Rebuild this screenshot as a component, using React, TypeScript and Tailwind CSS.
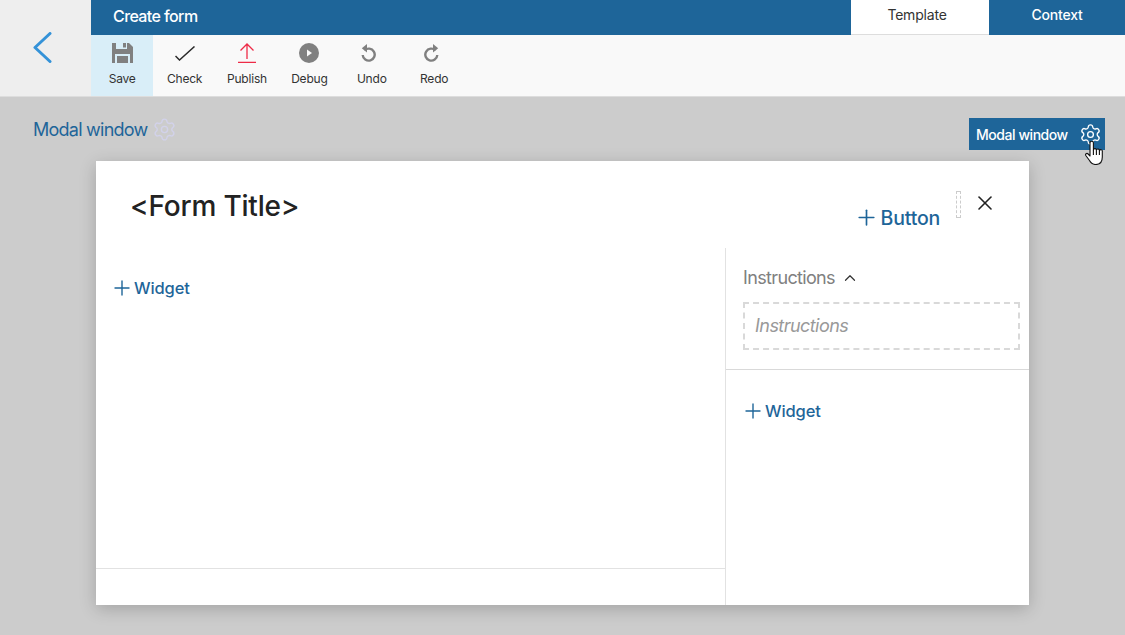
import { ChevronUp, Settings, X, Plus } from 'lucide-react';
import type { ReactNode } from 'react';

function ToolItem({ label, active, children }: { label: string; active?: boolean; children: ReactNode }) {
    return (
        <div className={`flex h-full w-[62.4px] flex-col items-center ${active ? 'bg-[#d9eef8]' : ''}`}>
            <div className="flex h-[36px] w-full items-center justify-center">{children}</div>
            <span className="pt-[1px] text-[12px] leading-[14px] tracking-[-0.2px] text-[#333333]">{label}</span>
        </div>
    );
}

function AddLink({ label }: { label: string }) {
    return (
        <div className="flex items-center text-[#1e6599]">
            <Plus className="h-[24px] w-[24px]" strokeWidth={1.4} />
            <span className="text-[16.5px] font-medium leading-[20px] tracking-[-0.1px]">{label}</span>
        </div>
    );
}

export default function App() {
    return (
        <div className="flex h-[635px] w-[1125px] flex-col overflow-hidden bg-[#cccccc] font-['Inter',sans-serif]">
            {/* Header */}
            <div className="flex h-[97px] shrink-0 border-b border-[#dddddd]">
                <div className="flex w-[91px] shrink-0 items-start bg-[#eeeeee] pl-[33px] pt-[32px]">
                    <svg width="19" height="31" viewBox="0 0 19 31" fill="none" stroke="#3492d8" strokeWidth="3" strokeLinecap="round" strokeLinejoin="round">
                        <path d="M17 1.5 2 15.5 17 29.5" />
                    </svg>
                </div>
                <div className="flex flex-1 flex-col">
                    <div className="flex h-[35px] items-stretch bg-[#1e6599]">
                        <div className="flex-1 pl-[22px] pt-[7px] text-[16px] font-medium leading-[19px] tracking-[-0.6px] text-white">Create form</div>
                        <div className="w-[138px] border-b border-[#dddddd] bg-white pr-[6px] pt-[6px] text-center text-[14px] leading-[17px] tracking-[-0.2px] text-[#333333]">Template</div>
                        <div className="w-[136px] pt-[6px] text-center text-[14px] font-medium leading-[18px] tracking-[-0.2px] text-white">Context</div>
                    </div>
                    <div className="flex h-[61px] bg-[#f9f9f9]">
                        <ToolItem label="Save" active>
                            <svg width="21" height="20" viewBox="0 0 21 20" fill="#808080">
                                <path fillRule="evenodd" d="M0 0h4v6h11V0h2l4 4v16h-3v-9H3v9H0zM11 0h3v4.500h-3z" />
                                <path d="M5 13h11v7H5z" />
                            </svg>
                        </ToolItem>
                        <ToolItem label="Check">
                            <svg width="20" height="15" viewBox="0 0 20 15" fill="none" stroke="#2b2b2b" strokeWidth="1.500">
                                <path d="M.5 10l4 4L19.500 .5" />
                            </svg>
                        </ToolItem>
                        <ToolItem label="Publish">
                            <svg width="18" height="20" viewBox="0 0 18 20" fill="none" stroke="#ee2b47" strokeWidth="1.300">
                                <path d="M9 16V1M2.500 7.500 9 1l6.500 6.500M0 19.300h18" />
                            </svg>
                        </ToolItem>
                        <ToolItem label="Debug">
                            <svg width="20" height="20" viewBox="0 0 20 20">
                                <circle cx="10" cy="10" r="10" fill="#808080" />
                                <path d="M8 6.500 13 10l-5 3.500z" fill="#f9f9f9" />
                            </svg>
                        </ToolItem>
                        <ToolItem label="Undo">
                            <svg className="mr-[6px]" width="15" height="18" viewBox="0 0 15 18" fill="none" stroke="#808080" strokeWidth="2.400">
                                <path d="M3.500 6.300a6 6 0 1 1-1.800 4.700" />
                                <path d="M6 0 .8 4.200 6 8.500z" fill="#808080" stroke="none" />
                            </svg>
                        </ToolItem>
                        <ToolItem label="Redo">
                            <svg className="mr-[6px]" width="15" height="18" viewBox="0 0 15 18" fill="none" stroke="#808080" strokeWidth="2.400">
                                <path d="M11.500 6.300a6 6 0 1 0 1.800 4.700" />
                                <path d="M9 0 14.200 4.200 9 8.500z" fill="#808080" stroke="none" />
                            </svg>
                        </ToolItem>
                    </div>
                </div>
            </div>

            {/* Modal caption row */}
            <div className="flex h-[64px] shrink-0 items-start justify-between pl-[33px] pr-[20px]">
                <div className="flex items-center gap-[4px] pt-[20px]">
                    <span className="text-[18px] leading-[22px] tracking-[-0.75px] text-[#1e6599]">Modal window</span>
                    <Settings className="h-[25px] w-[25px] text-[#d2d2ea]" strokeWidth={1.3} />
                </div>
                <div className="relative mt-[21px] flex h-[32px] w-[136px] items-center justify-between bg-[#1e6599] pl-[7px] pr-[3px]">
                    <span className="text-[14px] font-medium tracking-[-0.45px] text-white">Modal window</span>
                    <Settings className="h-[23px] w-[23px] text-white" strokeWidth={1.4} />
                    <svg className="absolute left-[116px] top-[23px]" width="18" height="24" viewBox="0 0 18 24" fill="#ffffff" stroke="#111111" strokeWidth="1.100" strokeLinejoin="round">
                        <path d="M5 2a1.700 1.700 0 0 1 3.400 0V9a1.500 1.500 0 0 1 3 .3 1.500 1.500 0 0 1 3 .5 1.400 1.400 0 0 1 2.900 .7V16c0 4-2 7.500-6.500 7.500-3 0-5-1.500-6.300-4L.8 14.500c-.8-1.500 1-2.800 2.300-1.500L5 15z" />
                        <path d="M8.400 9v5M11.400 9.300v4.700M14.400 9.800v4.200" fill="none" />
                    </svg>
                </div>
            </div>

            {/* Modal */}
            <div className="mx-[96px] flex h-[444px] w-[933px] shrink-0 flex-col bg-white shadow-[0_4px_16px_rgba(0,0,0,0.2)]">
                <div className="flex h-[87px] shrink-0">
                    <div className="flex-1 pl-[34px] pt-[27px] text-[28px] font-medium leading-[36px] tracking-[-0.2px] text-[#222222]">&lt;Form Title&gt;</div>
                    <div className="flex items-start">
                        <div className="mr-[1px] mt-[44px] flex items-center gap-[2px] text-[#1e6599]">
                            <Plus className="h-[25px] w-[25px]" strokeWidth={1.6} />
                            <span className="text-[19.5px] font-medium leading-[24px] tracking-[-0.2px]">Button</span>
                        </div>
                        <div className="ml-[15px] mt-[30px] h-[27px] w-[5px] border border-dashed border-[#cccccc]" />
                        <X className="ml-[12px] mr-[32px] mt-[30px] h-[24px] w-[24px] text-[#222222]" strokeWidth={1.6} />
                    </div>
                </div>
                <div className="flex min-h-0 flex-1">
                    <div className="flex w-[630px] shrink-0 flex-col border-r border-[#e2e2e2]">
                        <div className="flex-1 pl-[14px] pt-[28px]">
                            <AddLink label="Widget" />
                        </div>
                        <div className="h-[37px] border-t border-[#e2e2e2]" />
                    </div>
                    <div className="flex flex-1 flex-col">
                        <div className="h-[122px] border-b border-[#d9d9d9] pl-[17px] pr-[9px] pt-[19px]">
                            <div className="flex items-center gap-[6px] text-[#808080]">
                                <span className="text-[18px] leading-[22px] tracking-[-0.65px]">Instructions</span>
                                <ChevronUp className="h-[18px] w-[18px] text-[#333333]" strokeWidth={1.6} />
                            </div>
                            <div className="mt-[13px] flex h-[48px] items-center border-2 border-dashed border-[#d9d9d9] pb-[1px] pl-[10px] text-[18px] italic tracking-[-0.55px] text-[#999999]">
                                Instructions
                            </div>
                        </div>
                        <div className="pl-[15px] pt-[29px]">
                            <AddLink label="Widget" />
                        </div>
                    </div>
                </div>
            </div>
        </div>
    );
}
